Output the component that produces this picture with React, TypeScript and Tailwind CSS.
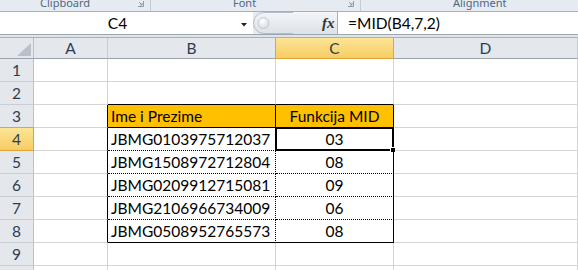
import React from "react";

const bData: Record<number, string> = {
  3: "Ime i Prezime",
  4: "JBMG0103975712037",
  5: "JBMG1508972712804",
  6: "JBMG0209912715081",
  7: "JBMG2106966734009",
  8: "JBMG0508952765573",
};
const cData: Record<number, string> = {
  3: "Funkcija MID",
  4: "03",
  5: "08",
  6: "09",
  7: "06",
  8: "08",
};

function Launcher() {
  return (
    <svg width="8" height="8" viewBox="0 0 8 8" className="absolute right-[5px] top-0">
      <path d="M1 6.5H6.5V1" fill="none" stroke="#8d9aa8" strokeWidth="1" />
      <path d="M2 2L5 5M5 3V5H3" fill="none" stroke="#8d9aa8" strokeWidth="1" />
    </svg>
  );
}

function rowHeaderClass(r: number) {
  if (r === 4)
    return "bg-linear-to-b from-[#fce596] to-[#f7cd62] border-r-[#e2a43a] border-b-[#e2a43a]";
  if (r === 3) return "bg-[#e4e7ec] border-r-[#b9c0c8] border-b-[#e2a43a]";
  return "bg-[#e4e7ec] border-r-[#b9c0c8] border-b-[#c9ced5]";
}

function aClass(r: number) {
  return r >= 3 && r <= 8 ? "border-r-black" : "border-r-[#d4d4d4]";
}

function bRight(r: number) {
  if (r === 3) return "border-r-black";
  if (r >= 4 && r <= 8) return "border-r-black [border-right-style:dotted]";
  return "border-r-[#d4d4d4]";
}

function bottomCls(r: number, isC: boolean) {
  if (r === 3 && isC) return "border-b-[#2d5fb0]";
  if (r === 2 || r === 3 || r === 8) return "border-b-black";
  if (r >= 4 && r <= 7) return "border-b-black [border-bottom-style:dotted]";
  return "border-b-[#d4d4d4]";
}

function cRight(r: number) {
  return r >= 3 && r <= 8 ? "border-r-black" : "border-r-[#d4d4d4]";
}

export default function App() {
  const rows = [1, 2, 3, 4, 5, 6, 7, 8, 9, 10];
  return (
    <div className="w-[578px] h-[270px] overflow-hidden bg-white font-['Lato',sans-serif] text-[15.5px] text-black">
      {/* Ribbon group labels */}
      <div className="h-[12px] border-b border-b-[#a7b1bc] bg-[#e6ebf1] flex overflow-hidden font-['Noto_Sans',sans-serif] text-[11px] leading-[11px] text-[#4f6784]">
        <div className="relative w-[151px] shrink-0 border-r border-r-[#c3cbd4] pl-[40px]">
          <div className="-mt-[3px]">Clipboard</div>
          <Launcher />
        </div>
        <div className="relative w-[210px] shrink-0 border-r border-r-[#c3cbd4] pl-[82px]">
          <div className="-mt-[3px]">Font</div>
          <Launcher />
        </div>
        <div className="relative flex-1 pl-[92px]">
          <div className="-mt-[3px]">Alignment</div>
        </div>
      </div>

      {/* Formula bar */}
      <div className="h-[23px] border-b border-b-[#9da7b2] flex bg-[#e7ebf0]">
        <div className="w-[253px] shrink-0 bg-white flex items-center">
          <div className="w-[235px] text-center leading-[22px]">C4</div>
          <svg width="7" height="4" viewBox="0 0 7 4" className="ml-[6px] mt-[3px]">
            <path d="M0 0H6L3 3.5Z" fill="#222" />
          </svg>
        </div>
        <div className="w-[84px] shrink-0 flex items-center relative">
          <svg width="84" height="22" viewBox="0 0 84 22" className="block">
            <defs>
              <linearGradient id="pill" x1="0" y1="0" x2="0" y2="1">
                <stop offset="0" stopColor="#f3f5f8" />
                <stop offset="1" stopColor="#dde2e8" />
              </linearGradient>
              <radialGradient id="knob" cx="0.4" cy="0.35" r="0.7">
                <stop offset="0" stopColor="#ffffff" />
                <stop offset="1" stopColor="#d5dbe2" />
              </radialGradient>
            </defs>
            <path d="M84 0H11A11 11 0 0 0 11 22H84Z" fill="url(#pill)" />
            <path d="M40 0.5H11A10.5 10.5 0 0 0 11 21.5H40" fill="none" stroke="#b3bcc6" />
            <circle cx="10.5" cy="11" r="5.5" fill="url(#knob)" stroke="#c3cad2" />
          </svg>
          <span className="absolute left-[69px] top-[1px] font-['Liberation_Serif',serif] italic font-bold text-[15px] leading-[20px] text-[#333]">
            fx
          </span>
        </div>
        <div className="flex-1 bg-white border-l border-l-[#a9b2bc] pl-[10px] leading-[22px]">
          =MID(B4,7,2)
        </div>
      </div>
      <div className="h-[3px] bg-[#dfe4ea] border-b border-b-[#a9b1ba]" />

      {/* Column headers */}
      <div className="flex h-[21px] text-[#2c3d54]">
        <div className="w-[34px] shrink-0 bg-[#e4e7ec] border-r border-r-[#b9c0c8] border-b border-b-[#9aa3ad] flex items-end justify-end pr-[2px] pb-[2px]">
          <svg width="14" height="13" viewBox="0 0 14 13">
            <path d="M14 0V13H0Z" fill="#b9c0c8" />
          </svg>
        </div>
        <div className="w-[74px] shrink-0 bg-[#e4e7ec] border-r border-r-[#c8cdd4] border-b border-b-[#9aa3ad] text-center leading-[20px]">
          A
        </div>
        <div className="w-[168px] shrink-0 bg-[#e4e7ec] border-r border-r-[#e2a43a] border-b border-b-[#9aa3ad] text-center leading-[20px]">
          B
        </div>
        <div className="w-[118px] shrink-0 bg-linear-to-b from-[#fce596] to-[#f7cd62] border-r border-r-[#e2a43a] border-b border-b-[#e2a43a] text-center leading-[20px]">
          C
        </div>
        <div className="flex-1 bg-[#e4e7ec] border-r border-r-[#c8cdd4] border-b border-b-[#9aa3ad] text-center leading-[20px]">
          D
        </div>
      </div>

      {/* Rows */}
      {rows.map((r) => (
        <div key={r} className="flex h-[23px]">
          <div
            className={
              "w-[34px] shrink-0 border-r border-b text-center leading-[22px] text-[#2c3d54] " +
              rowHeaderClass(r)
            }
          >
            {r}
          </div>
          <div className={"w-[74px] shrink-0 border-r border-b border-b-[#d4d4d4] " + aClass(r)} />
          <div
            className={
              "w-[168px] shrink-0 border-r border-b pl-[3px] leading-[22px] whitespace-nowrap " +
              bRight(r) +
              " " +
              bottomCls(r, false) +
              (r === 3 ? " bg-[#ffc000]" : "")
            }
          >
            {bData[r] ?? ""}
          </div>
          <div
            className={
              "relative w-[118px] shrink-0 border-r border-b text-center leading-[22px] " +
              cRight(r) +
              " " +
              bottomCls(r, true) +
              (r === 3 ? " bg-[#ffc000]" : "")
            }
          >
            {cData[r] ?? ""}
            {r === 4 && (
              <div className="absolute -inset-px border-2 border-black">
                <div className="absolute -right-[4px] -bottom-[4px] w-[6px] h-[6px] bg-black border border-white" />
              </div>
            )}
          </div>
          <div className="flex-1 border-r border-r-[#d4d4d4] border-b border-b-[#d4d4d4]" />
        </div>
      ))}
    </div>
  );
}
